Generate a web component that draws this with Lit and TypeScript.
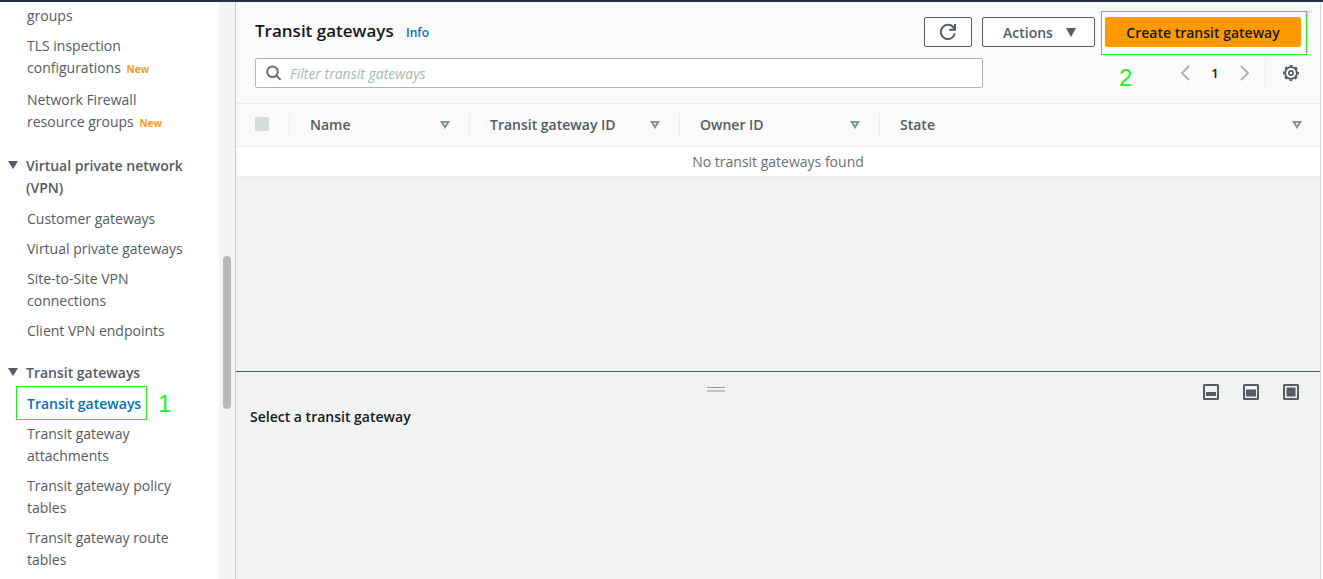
import { LitElement, html, svg, css, nothing } from "lit";
import { customElement } from "lit/decorators.js";
import { classMap } from "lit/directives/class-map.js";

interface NavItem {
  label: string;
  isNew?: boolean;
  current?: boolean;
}

interface NavSection {
  title?: string;
  items: NavItem[];
}

const SECTIONS: NavSection[] = [
  {
    items: [
      { label: "groups" },
      { label: "TLS inspection configurations", isNew: true },
      { label: "Network Firewall resource groups", isNew: true },
    ],
  },
  {
    title: "Virtual private network (VPN)",
    items: [
      { label: "Customer gateways" },
      { label: "Virtual private gateways" },
      { label: "Site-to-Site VPN connections" },
      { label: "Client VPN endpoints" },
    ],
  },
  {
    title: "Transit gateways",
    items: [
      { label: "Transit gateways", current: true },
      { label: "Transit gateway attachments" },
      { label: "Transit gateway policy tables" },
      { label: "Transit gateway route tables" },
    ],
  },
];

const COLUMNS = [
  { label: "Name", cls: "col-name" },
  { label: "Transit gateway ID", cls: "col-id" },
  { label: "Owner ID", cls: "col-owner" },
  { label: "State", cls: "col-state" },
];

@customElement("side-nav")
export class SideNav extends LitElement {
  static styles = css`
    :host {
      display: grid;
      grid-template-columns: 1fr 16px;
      min-height: 0;
      background: #fff;
    }
    .content {
      overflow: hidden;
      padding: 3px 28px 0 8px;
      font-size: 14px;
      line-height: 22px;
      color: #545b64;
    }
    .list {
      list-style: none;
      margin: 0;
      padding: 0 0 0 19px;
      display: flex;
      flex-direction: column;
      gap: 8px;
    }
    .section + .section {
      margin-top: 20px;
    }
    .heading {
      display: flex;
      align-items: flex-start;
      gap: 8px;
      width: 100%;
      margin: 0 0 9px;
      padding: 0;
      border: 0;
      background: none;
      font: inherit;
      font-weight: 600;
      color: inherit;
      text-align: left;
    }
    .caret {
      flex: none;
      width: 10px;
      height: 8px;
      margin-top: 6px;
      fill: #545b64;
    }
    .link {
      color: inherit;
      text-decoration: none;
    }
    .badged {
      padding-bottom: 2px;
    }
    .new {
      margin-left: 2px;
      font-size: 10px;
      line-height: 1;
      font-weight: 700;
      color: #ff9921;
    }
    .current {
      position: relative;
      font-weight: 600;
      color: #0073bb;
    }
    .mark {
      position: absolute;
      inset: -7px auto -5px -11px;
      width: 129px;
      border: 1px solid #1bf31b;
    }
    .step {
      position: absolute;
      left: 131px;
      top: -1px;
      font: 24px/24px "Liberation Sans", Arial, sans-serif;
      color: #1bf31b;
    }
    .track {
      display: grid;
      grid-template-rows: 254fr 153fr 170fr;
      padding: 0 4px;
      background: #f4f4f4;
    }
    .thumb {
      grid-row: 2;
      border-radius: 4px;
      background: #b7b7b7;
    }
  `;

  render() {
    return html`
      <nav class="content" aria-label="VPC">
        ${SECTIONS.map(
          (s) => html`<div class="section">
            ${s.title
              ? html`<button class="heading" aria-expanded="true">
                  <svg class="caret" viewBox="0 0 10 8"><path d="M0 0H10L5 8Z" /></svg>
                  <span>${s.title}</span>
                </button>`
              : nothing}
            <ul class="list">
              ${s.items.map(
                (i) => html`<li class=${classMap({ badged: !!i.isNew, current: !!i.current })}>
                  <a class="link" href="#">${i.label}</a>
                  ${i.isNew ? html`<span class="new">New</span>` : nothing}
                  ${i.current ? html`<span class="mark"></span><span class="step">1</span>` : nothing}
                </li>`
              )}
            </ul>
          </div>`
        )}
      </nav>
      <div class="track"><div class="thumb"></div></div>
    `;
  }
}

@customElement("gateway-list")
export class GatewayList extends LitElement {
  static styles = css`
    :host {
      display: block;
      background: #f1f3f3;
    }
    .header {
      display: flex;
      flex-direction: column;
      gap: 11px;
      padding: 15px 19px;
      background: #fafafa;
      border-bottom: 1px solid #eaeded;
    }
    .row,
    .actions,
    .pager {
      display: flex;
      align-items: center;
    }
    .row {
      height: 30px;
      justify-content: space-between;
    }
    .title {
      margin: 0;
      font-size: 17px;
      line-height: 22px;
      font-weight: 600;
      color: #16191f;
    }
    .info {
      margin-left: 8px;
      font-size: 12px;
      font-weight: 600;
      color: #0073bb;
      text-decoration: none;
    }
    .actions {
      gap: 10px;
    }
    .btn {
      display: flex;
      align-items: center;
      justify-content: center;
      gap: 12px;
      box-sizing: border-box;
      height: 30px;
      padding: 0 20px;
      border: 1px solid #545b64;
      border-radius: 2px;
      background: #fff;
      font: inherit;
      font-size: 14px;
      font-weight: 600;
      color: #545b64;
    }
    .refresh {
      width: 48px;
      padding: 0;
    }
    .menu {
      width: 113px;
      padding: 0 18px 0 20px;
      justify-content: space-between;
    }
    .primary-wrap {
      position: relative;
    }
    .primary {
      width: 196px;
      padding: 0;
      border-color: #ff9900;
      background: #ff9900;
      color: #16191f;
    }
    .mark {
      position: absolute;
      inset: -6px -6px -8px -4px;
      border: 1px solid #1bf31b;
      pointer-events: none;
    }
    .step {
      position: absolute;
      left: 14px;
      top: 49px;
      font: 24px/24px "Liberation Sans", Arial, sans-serif;
      color: #1bf31b;
    }
    .search {
      flex: 1;
      display: flex;
      align-items: center;
      gap: 8px;
      box-sizing: border-box;
      height: 30px;
      padding: 0 9px;
      border: 1px solid #aab7b8;
      border-radius: 2px;
      background: #fff;
    }
    .input {
      flex: 1;
      min-width: 0;
      padding: 0;
      border: 0;
      outline: 0;
      background: none;
      font: inherit;
      font-size: 14px;
      color: #16191f;
    }
    .input::placeholder {
      color: #aab7b8;
      font-style: italic;
      opacity: 1;
    }
    .pager {
      width: 318px;
      justify-content: flex-end;
    }
    .plain {
      display: flex;
      padding: 0;
      border: 0;
      background: none;
    }
    .page {
      width: 48px;
      text-align: center;
      font-size: 13px;
      font-weight: 600;
      color: #16191f;
    }
    .prefs {
      display: flex;
      align-items: center;
      height: 30px;
      margin-left: 14px;
      padding: 0 2px 0 17px;
      border-left: 1px solid #eaeded;
    }
    .table {
      width: 100%;
      table-layout: fixed;
      border-collapse: collapse;
      font-size: 14px;
      line-height: 22px;
      color: #545b64;
    }
    .th {
      height: 42px;
      padding: 0;
      background: #fafafa;
      border-bottom: 1px solid #eaeded;
      text-align: left;
      font-weight: 600;
    }
    .cell {
      display: flex;
      align-items: center;
      justify-content: space-between;
      height: 22px;
      padding: 0 19px 0 20px;
      border-right: 1px solid #eaeded;
    }
    .col-select .cell {
      padding-left: 19px;
    }
    .col-state .cell {
      border-right: 0;
      padding-right: 18px;
    }
    .col-select {
      width: 54px;
    }
    .col-name {
      width: 180px;
    }
    .col-id {
      width: 210px;
    }
    .col-owner {
      width: 200px;
    }
    .check {
      appearance: none;
      width: 14px;
      height: 14px;
      margin: 0 0 2px;
      border-radius: 2px;
      background: #d5dbdb;
    }
    .empty {
      height: 29px;
      padding: 0;
      background: #fff;
      border-bottom: 1px solid #eaeded;
      text-align: center;
      color: #687078;
    }
  `;

  render() {
    return html`
      <div class="header">
        <div class="row">
          <h1 class="title">Transit gateways <a class="info" href="#">Info</a></h1>
          <div class="actions">
            <button class="btn refresh" aria-label="Refresh">
              <svg width="18" height="18" viewBox="0 0 18 18" fill="none" stroke="#545b64" stroke-width="2">
                <path d="M15.9 10.6A7.1 7.1 0 1 1 14.6 4.6L16 6.2" />
                <path d="M16 1V6.8H10.2" />
              </svg>
            </button>
            <button class="btn menu" aria-haspopup="true">
              Actions
              <svg width="10" height="9" viewBox="0 0 10 9" fill="#545b64"><path d="M0 0H10L5 9Z" /></svg>
            </button>
            <div class="primary-wrap">
              <button class="btn primary">Create transit gateway</button>
              <span class="mark"></span>
              <span class="step">2</span>
            </div>
          </div>
        </div>
        <div class="row">
          <label class="search">
            <svg width="17" height="16" viewBox="0 0 17 16" fill="none" stroke="#687078" stroke-width="2">
              <circle cx="7.5" cy="6.8" r="5.3" />
              <path d="M11.3 10.6L15.6 14.9" />
            </svg>
            <input class="input" type="text" placeholder="Filter transit gateways" aria-label="Filter transit gateways" />
          </label>
          <div class="pager">
            <button class="plain" aria-label="Previous page">
              <svg width="12" height="16" viewBox="0 0 12 16" fill="none" stroke="#aab7b8" stroke-width="2">
                <path d="M10 1L3 8L10 15" />
              </svg>
            </button>
            <span class="page">1</span>
            <button class="plain" aria-label="Next page">
              <svg width="12" height="16" viewBox="0 0 12 16" fill="none" stroke="#aab7b8" stroke-width="2">
                <path d="M2 1L9 8L2 15" />
              </svg>
            </button>
            <div class="prefs">
              <button class="plain" aria-label="Preferences">
                <svg width="16" height="16" viewBox="0 0 16 16" fill="none" stroke="#545b64">
                  <circle cx="8" cy="8" r="5.9" stroke-width="1.9" />
                  <circle cx="8" cy="8" r="7.2" stroke-width="1.6" stroke-dasharray="3 2.655" stroke-dashoffset="1.5" />
                  <circle cx="8" cy="8" r="2.1" stroke-width="1.7" />
                </svg>
              </button>
            </div>
          </div>
        </div>
      </div>
      <table class="table">
        <thead>
          <tr>
            <th class="th col-select">
              <div class="cell"><input class="check" type="checkbox" disabled aria-label="Select all" /></div>
            </th>
            ${COLUMNS.map(
              (c) => html`<th class="th ${c.cls}">
                <div class="cell">
                  <span>${c.label}</span>
                  <svg width="10" height="8" viewBox="0 0 10 8" fill="none" stroke="#879596" stroke-width="2">
                    <path d="M1.7 1H8.3L5 6.2Z" />
                  </svg>
                </div>
              </th>`
            )}
          </tr>
        </thead>
        <tbody>
          <tr>
            <td class="empty" colspan="5">No transit gateways found</td>
          </tr>
        </tbody>
      </table>
    `;
  }
}

const LAYOUTS = [
  { label: "Small panel", fill: svg`<path d="M3 8H13V12H3Z" />` },
  { label: "Half panel", fill: svg`<path d="M3 5.5H13V12.5H3Z" />` },
  { label: "Full panel", fill: svg`<path d="M3.5 3.5H12.5V12.5H3.5Z" />` },
];

@customElement("split-panel")
export class SplitPanel extends LitElement {
  static styles = css`
    :host {
      display: block;
      border-top: 1px solid #545b64;
      background: #f1f3f3;
    }
    .bar {
      display: grid;
      grid-template-columns: 1fr auto 1fr;
      padding: 12px 21px 0 14px;
    }
    .grip {
      grid-column: 2;
      width: 18px;
      height: 2px;
      margin-top: 3px;
      margin-right: 118px;
      border-top: 1px solid #939797;
      border-bottom: 2px solid #c3c5c5;
    }
    .sizes {
      display: flex;
      justify-content: flex-end;
      gap: 24px;
    }
    .size {
      display: flex;
      padding: 0;
      border: 0;
      background: none;
    }
    .title {
      margin: 6px 14px;
      font-size: 14px;
      line-height: 22px;
      font-weight: 600;
      color: #16191f;
    }
  `;

  render() {
    return html`
      <div class="bar">
        <div class="grip" role="separator"></div>
        <div class="sizes">
          ${LAYOUTS.map(
            (l) => html`<button class="size" aria-label=${l.label}>
              <svg width="16" height="16" viewBox="0 0 16 16" fill="#545b64">
                <rect x="1" y="1" width="14" height="14" rx="0.5" fill="none" stroke="#545b64" stroke-width="2" />
                ${l.fill}
              </svg>
            </button>`
          )}
        </div>
      </div>
      <h2 class="title">Select a transit gateway</h2>
    `;
  }
}

@customElement("app-root")
export class AppRoot extends LitElement {
  static styles = css`
    :host {
      display: grid;
      grid-template-columns: 235px 1fr;
      height: 100vh;
      box-sizing: border-box;
      overflow: hidden;
      border-top: 2px solid #232f3e;
      background: #fafafa;
      font-family: "Open Sans", "Noto Sans", sans-serif;
    }
    .main {
      display: grid;
      grid-template-rows: 16fr 9fr;
      min-height: 0;
      margin-right: 2px;
      border-left: 1px solid #c6cacb;
      border-right: 1px solid #d5dbdb;
    }
  `;

  render() {
    return html`
      <side-nav></side-nav>
      <main class="main">
        <gateway-list></gateway-list>
        <split-panel></split-panel>
      </main>
    `;
  }
}
